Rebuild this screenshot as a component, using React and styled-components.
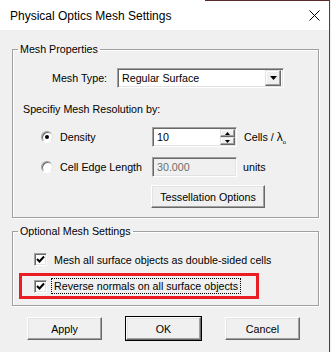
import React from "react";
import styled, { createGlobalStyle } from "styled-components";

const GlobalStyle = createGlobalStyle`
  html, body {
    margin: 0;
    padding: 0;
    background: #f0f0f0;
  }
  body {
    font-family: "Liberation Sans", Arial, sans-serif;
    font-size: 10.7px;
    color: #000;
  }
`;

const Window = styled.div`
  width: 330px;
  height: 352px;
  box-sizing: border-box;
  border-right: 1px solid #6f3535;
  background: #f0f0f0;
  display: flex;
  flex-direction: column;
`;

const TitleBar = styled.div`
  height: 30px;
  flex: none;
  box-sizing: border-box;
  background: #fff;
  border-top: 1px solid;
  border-image: linear-gradient(to right, #fff 205px, #5a2a2a 205px) 1;
  display: flex;
  align-items: center;
  justify-content: space-between;
  padding: 0 9px 0 10px;
`;

const Title = styled.span`
  font-size: 12px;
  color: #000;
`;

const Body = styled.div`
  padding: 13px 10px 0 12px;
  display: flex;
  flex-direction: column;
`;

const Group = styled.fieldset`
  margin: ${(p) => p.$top || 0}px 0 0 0;
  padding: 0 0 ${(p) => p.$bottom || 0}px 0;
  min-width: 0;
  border: 1px solid #a0a0a0;
  box-shadow: inset 1px 1px #fff, 1px 1px #fff;
  display: flex;
  flex-direction: column;
`;

const Legend = styled.legend`
  margin-left: 5px;
  padding: 0 2px;
  line-height: 13px;
`;

const Row = styled.div`
  display: flex;
  align-items: center;
  height: ${(p) => p.$h || 20}px;
  margin-top: ${(p) => p.$top || 0}px;
  padding-left: ${(p) => p.$left || 0}px;
`;

const Label = styled.span`
  width: ${(p) => p.$w}px;
  flex: none;
  white-space: nowrap;
`;

const Sunken = styled.div`
  box-sizing: border-box;
  height: 100%;
  width: ${(p) => p.$w}px;
  flex: none;
  border: 1px solid;
  border-color: #a0a0a0 #fff #fff #a0a0a0;
  box-shadow: inset 1px 1px #696969, inset -1px -1px #e3e3e3;
  background: ${(p) => (p.$disabled ? "#f0f0f0" : "#fff")};
  color: ${(p) => (p.$disabled ? "#6d6d6d" : "#000")};
  display: flex;
  align-items: center;
  padding: 2px 2px 2px 4px;
`;

const FieldText = styled.span`
  flex: 1;
  white-space: nowrap;
`;

const ArrowButton = styled.div`
  box-sizing: border-box;
  width: 16px;
  height: 16px;
  background: #f0f0f0;
  border: 1px solid;
  border-color: #e3e3e3 #696969 #696969 #e3e3e3;
  box-shadow: inset -1px -1px #a0a0a0, inset 1px 1px #fff;
  display: flex;
  align-items: center;
  justify-content: center;
`;

const SpinStack = styled.div`
  display: flex;
  flex-direction: column;
  margin-right: -1px;
`;

const SpinButton = styled(ArrowButton)`
  width: 15px;
  height: 8px;
`;

const Unit = styled.span`
  margin-left: ${(p) => p.$gap || 7}px;
  white-space: nowrap;
`;

const Radio = styled.span`
  box-sizing: border-box;
  width: 12px;
  height: 12px;
  flex: none;
  border-radius: 50%;
  border: 1px solid;
  border-color: #a0a0a0 #e3e3e3 #fff #a0a0a0;
  box-shadow: inset 1px 1px #696969;
  background: #fff;
  display: flex;
  align-items: center;
  justify-content: center;
  margin-right: 7px;

  &::after {
    content: "";
    width: 4px;
    height: 4px;
    border-radius: 50%;
    background: ${(p) => (p.$on ? "#000" : "transparent")};
  }
`;

const CheckBox = styled.span`
  box-sizing: border-box;
  width: 13px;
  height: 13px;
  flex: none;
  border: 1px solid;
  border-color: #a0a0a0 #fff #fff #a0a0a0;
  box-shadow: inset 1px 1px #696969, inset -1px -1px #e3e3e3;
  background: #fff;
  display: flex;
  align-items: center;
  justify-content: center;
  margin-right: ${(p) => p.$gap || 7}px;
`;

const Button = styled.button`
  box-sizing: border-box;
  width: ${(p) => p.$w || 75}px;
  height: 23px;
  flex: none;
  margin: 0;
  padding: 0;
  font: inherit;
  color: #000;
  background: #f0f0f0;
  border: 1px solid;
  border-color: #fff #696969 #696969 #fff;
  box-shadow: inset -1px -1px #a0a0a0, inset 1px 1px #e3e3e3;
  outline: ${(p) => (p.$default ? "1px solid #000" : "none")};
  outline-offset: 0;
`;

const Highlight = styled.div`
  box-sizing: border-box;
  width: 240px;
  height: 26px;
  margin: 7px 0 0 6px;
  border: 3px solid #ec1c24;
  display: flex;
  align-items: center;
  padding-left: 12px;
`;

const Focus = styled.span`
  border: 1px dotted #000;
  padding: 1px 2px 1px 2px;
  line-height: 12px;
  white-space: nowrap;
  margin-left: -3px;
`;

const ButtonRow = styled.div`
  display: flex;
  margin: 11px 0 0 15px;
  gap: 24px;
`;

const Lambda = styled.span`
  font-size: 12px;
`;

const Sub = styled.sub`
  font-size: 6px;
  vertical-align: -3px;
`;

const Tri = ({ up }) => (
  <svg width="5" height="3" viewBox="0 0 5 3">
    <polygon points={up ? "0,3 5,3 2.5,0" : "0,0 5,0 2.5,3"} fill="#000" />
  </svg>
);

const Check = () => (
  <svg width="9" height="9" viewBox="0 0 9 9">
    <polyline
      points="1,4 3.5,6.5 8,1.5"
      fill="none"
      stroke="#000"
      strokeWidth="2"
    />
  </svg>
);

export default function App() {
  return (
    <Window>
      <GlobalStyle />
      <TitleBar>
        <Title>Physical Optics Mesh Settings</Title>
        <svg width="11" height="11" viewBox="0 0 11 11">
          <path d="M0.5 0.5 L10.5 10.5 M10.5 0.5 L0.5 10.5" stroke="#000" strokeWidth="1" />
        </svg>
      </TitleBar>
      <Body>
        <Group $bottom={9}>
          <Legend>Mesh Properties</Legend>
          <Row $top={12} $left={39}>
            <Label $w={65}>Mesh Type:</Label>
            <Sunken $w={167}>
              <FieldText>Regular Surface</FieldText>
              <ArrowButton>
                <svg width="7" height="4" viewBox="0 0 7 4">
                  <polygon points="0,0 7,0 3.5,4" fill="#000" />
                </svg>
              </ArrowButton>
            </Sunken>
          </Row>
          <Row $h={13} $top={14} $left={10}>
            Specifiy Mesh Resolution by:
          </Row>
          <Row $top={12} $left={28}>
            <Radio $on />
            <Label $w={92}>Density</Label>
            <Sunken $w={85}>
              <FieldText>10</FieldText>
              <SpinStack>
                <SpinButton>
                  <Tri up />
                </SpinButton>
                <SpinButton>
                  <Tri />
                </SpinButton>
              </SpinStack>
            </Sunken>
            <Unit>
              Cells / <Lambda>λ</Lambda>
              <Sub>o</Sub>
            </Unit>
          </Row>
          <Row $top={10} $left={28}>
            <Radio />
            <Label $w={92}>Cell Edge Length</Label>
            <Sunken $w={85} $disabled>
              <FieldText>30.000</FieldText>
            </Sunken>
            <Unit $gap={6}>units</Unit>
          </Row>
          <Row $h={23} $top={8} $left={138}>
            <Button $w={114}>Tessellation Options</Button>
          </Row>
        </Group>
        <Group $top={7} $bottom={6}>
          <Legend>Optional Mesh Settings</Legend>
          <Row $h={13} $top={15} $left={21}>
            <CheckBox>
              <Check />
            </CheckBox>
            Mesh all surface objects as double-sided cells
          </Row>
          <Highlight>
            <CheckBox $gap={7}>
              <Check />
            </CheckBox>
            <Focus>Reverse normals on all surface objects</Focus>
          </Highlight>
        </Group>
        <ButtonRow>
          <Button>Apply</Button>
          <Button $default>OK</Button>
          <Button>Cancel</Button>
        </ButtonRow>
      </Body>
    </Window>
  );
}
